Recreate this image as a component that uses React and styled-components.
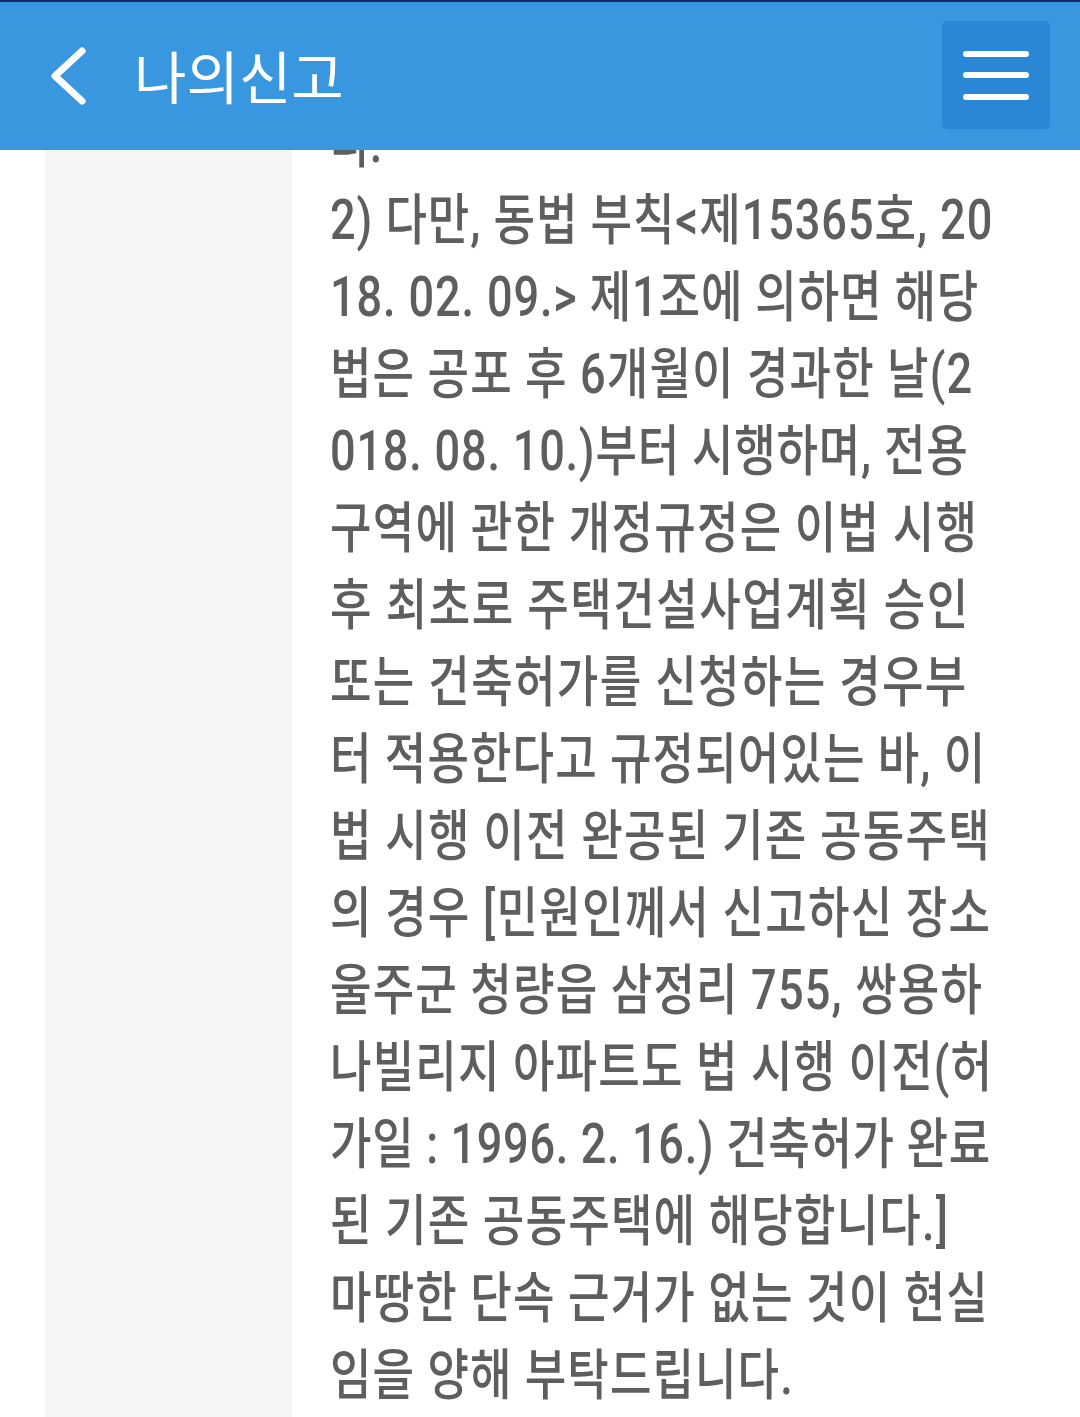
import React, { useLayoutEffect, useRef, useState } from 'react';
import styled, { createGlobalStyle } from 'styled-components';

const SCALE = 0.82;
const BASE_LS = -2;

const GlobalStyle = createGlobalStyle`
  html, body {
    margin: 0;
    padding: 0;
    background: #ffffff;
    overflow: hidden;
  }

  body {
    font-family: 'Roboto', 'Noto Sans CJK KR', sans-serif;
  }
`;

const Page = styled.div`
  position: relative;
  width: 1080px;
  height: 1417px;
  overflow: hidden;
  background: #ffffff;
`;

const Header = styled.header`
  position: fixed;
  top: 0;
  left: 0;
  right: 0;
  z-index: 10;
  height: 150px;
  box-sizing: border-box;
  border-top: 2px solid #17296a;
  background: #3997df;
  display: flex;
  align-items: center;
  padding: 0 30px 0 48px;
`;

const BackButton = styled.button`
  width: 44px;
  height: 60px;
  padding: 0;
  border: 0;
  background: transparent;
  display: flex;
  align-items: center;
  cursor: pointer;
`;

const Title = styled.h1`
  margin: 0 0 0 42px;
  flex: 1;
  color: #ffffff;
  font-family: 'Noto Sans CJK KR', sans-serif;
  font-size: 57px;
  font-weight: 400;
  letter-spacing: 0;
  line-height: 1;
  padding-bottom: 4px;
`;

const MenuButton = styled.button`
  width: 108px;
  height: 108px;
  margin-top: -2px;
  border: 0;
  border-radius: 5px;
  background: #2a87d6;
  display: flex;
  flex-direction: column;
  align-items: center;
  justify-content: center;
  gap: 15.5px;
  padding: 0;
  cursor: pointer;
`;

const Bar = styled.span`
  display: block;
  width: 66px;
  height: 6px;
  border-radius: 3px;
  background: #ffffff;
`;

const Body = styled.div`
  display: grid;
  grid-template-columns: 45px 247px 1fr;
  min-height: 1417px;
`;

const Gutter = styled.div`
  background: #ffffff;
`;

const SideColumn = styled.aside`
  background: #f6f6f6;
`;

const Content = styled.main`
  padding: 105px 0 0 38px;
  overflow: hidden;
`;

const Paragraph = styled.div`
  color: #5e5e5e;
  font-size: 55px;
  font-weight: 500;
  line-height: 77px;
  transform: scaleX(${SCALE});
  transform-origin: 0 0;
  width: max-content;
`;

const LineText = styled.div`
  white-space: pre;
  width: max-content;
  letter-spacing: ${BASE_LS}px;
`;

const TEXT_LEFT = 330;

const lines = [
  { text: '다.' },
  { text: '2) 다만, 동법 부칙<제15365호, 20', right: 992 },
  { text: '18. 02. 09.> 제1조에 의하면 해당', right: 978 },
  { text: '법은 공포 후 6개월이 경과한 날(2', right: 972 },
  { text: '018. 08. 10.)부터 시행하며, 전용', right: 968 },
  { text: '구역에 관한 개정규정은 이법 시행', right: 977 },
  { text: '후 최초로 주택건설사업계획 승인', right: 968 },
  { text: '또는 건축허가를 신청하는 경우부', right: 966 },
  { text: '터 적용한다고 규정되어있는 바, 이', right: 985 },
  { text: '법 시행 이전 완공된 기존 공동주택', right: 990 },
  { text: '의 경우 [민원인께서 신고하신 장소', right: 990 },
  { text: '울주군 청량읍 삼정리 755, 쌍용하', right: 982 },
  { text: '나빌리지 아파트도 법 시행 이전(허', right: 992 },
  { text: '가일 : 1996. 2. 16.) 건축허가 완료', right: 990 },
  { text: '된 기존 공동주택에 해당합니다.]', right: 948 },
  { text: '마땅한 단속 근거가 없는 것이 현실', right: 988 },
  { text: '임을 양해 부탁드립니다.', right: 793 },
];

// stretches or squeezes a line so its right edge lands where the original wraps
function Line({ text, right }) {
  const ref = useRef(null);
  const [spacing, setSpacing] = useState(null);

  useLayoutEffect(() => {
    if (!right || !ref.current) return;
    const natural = ref.current.offsetWidth - BASE_LS;
    const count = [...text].length;
    const target = (right - TEXT_LEFT) / SCALE;
    setSpacing(BASE_LS + (target - natural) / Math.max(count - 1, 1));
  }, [text, right]);

  return (
    <LineText ref={ref} style={spacing !== null ? { letterSpacing: `${spacing}px` } : undefined}>
      {text}
    </LineText>
  );
}

function ChevronLeft() {
  return (
    <svg width="44" height="60" viewBox="0 0 44 60" fill="none">
      <path
        d="M34 5 L7 30 L34 55"
        stroke="#ffffff"
        strokeWidth="7"
        strokeLinecap="round"
        strokeLinejoin="round"
      />
    </svg>
  );
}

export default function App() {
  return (
    <>
      <GlobalStyle />
      <Page>
        <Header>
          <BackButton aria-label="뒤로">
            <ChevronLeft />
          </BackButton>
          <Title>나의신고</Title>
          <MenuButton aria-label="메뉴">
            <Bar />
            <Bar />
            <Bar />
          </MenuButton>
        </Header>
        <Body>
          <Gutter />
          <SideColumn />
          <Content>
            <Paragraph>
              {lines.map((line, i) => (
                <Line key={i} text={line.text} right={line.right} />
              ))}
            </Paragraph>
          </Content>
        </Body>
      </Page>
    </>
  );
}
